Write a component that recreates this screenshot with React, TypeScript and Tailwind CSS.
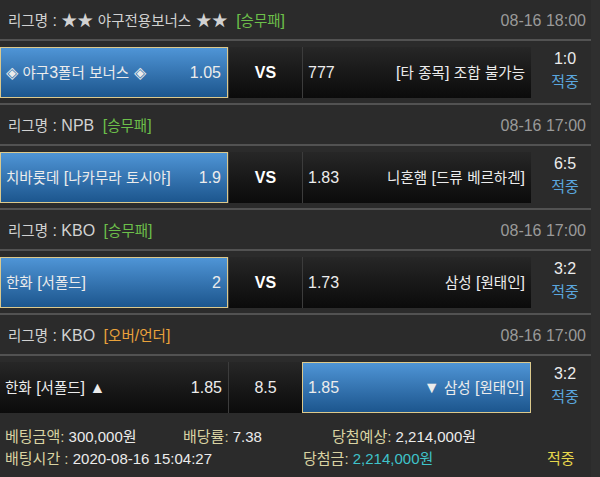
type Match = {
  league: string;
  market: string;
  marketColor: string;
  time: string;
  home: string;
  homeOdds: string;
  mid: string;
  midBold: boolean;
  awayOdds: string;
  away: string;
  score: string;
  pick: 'home' | 'away';
};

const matches: Match[] = [
  { league: '★★ 야구전용보너스 ★★', market: '[승무패]', marketColor: 'text-[#6cbf4a]', time: '08-16 18:00', home: '◈ 야구3폴더 보너스 ◈', homeOdds: '1.05', mid: 'VS', midBold: true, awayOdds: '777', away: '[타 종목] 조합 불가능', score: '1:0', pick: 'home' },
  { league: 'NPB', market: '[승무패]', marketColor: 'text-[#6cbf4a]', time: '08-16 17:00', home: '치바롯데 [나카무라 토시야]', homeOdds: '1.9', mid: 'VS', midBold: true, awayOdds: '1.83', away: '니혼햄 [드류 베르하겐]', score: '6:5', pick: 'home' },
  { league: 'KBO', market: '[승무패]', marketColor: 'text-[#6cbf4a]', time: '08-16 17:00', home: '한화 [서폴드]', homeOdds: '2', mid: 'VS', midBold: true, awayOdds: '1.73', away: '삼성 [원태인]', score: '3:2', pick: 'home' },
  { league: 'KBO', market: '[오버/언더]', marketColor: 'text-[#e9a23b]', time: '08-16 17:00', home: '한화 [서폴드] ▲', homeOdds: '1.85', mid: '8.5', midBold: false, awayOdds: '1.85', away: '▼ 삼성 [원태인]', score: '3:2', pick: 'away' },
];

const blue = 'bg-linear-to-b from-[#4f95d6] to-[#1c568e] border border-[#dcc98c]';
const dark = 'bg-linear-to-b from-[#272727] to-[#0b0b0b]';

// hangul glyphs run a bit narrower than Noto in the original, shrink them slightly
function K({ text }: { text: string }) {
  return (
    <>
      {text.split(/([\uAC00-\uD7A3]+)/).map((part, i) =>
        /[\uAC00-\uD7A3]/.test(part) ? <span key={i} className="text-[14.5px]">{part}</span> : part
      )}
    </>
  );
}

function MatchBlock({ m, last }: { m: Match; last: boolean }) {
  return (
    <div>
      <div className="h-[39px] flex items-center justify-between pt-[2px] pl-[8px] pr-[5px] text-[16px]">
        <div className="text-[#d2d2d2]">
          <K text={`리그명 : ${m.league}`} /> <span className={`ml-[4px] ${m.marketColor}`}><K text={m.market} /></span>
        </div>
        <div className="text-[#9a9a9a]">{m.time}</div>
      </div>
      <div className="h-[2px] bg-[#525252]" />
      <div className="flex pt-[6px] pb-[4px] text-[16px] text-[#ececec]">
        <div className={`w-[228px] h-[51px] flex items-center justify-between pl-[5px] pr-[6px] ${m.pick === 'home' ? blue : dark}`}>
          <span><K text={m.home} /></span>
          <span>{m.homeOdds}</span>
        </div>
        <div className={`w-[74px] h-[51px] flex items-center justify-center border-l border-[#3c3c3c] ${dark} ${m.midBold ? 'font-bold text-white' : ''}`}>
          {m.mid}
        </div>
        <div className={`w-[229px] h-[51px] flex items-center justify-between pl-[5px] pr-[6px] ${m.pick === 'away' ? blue : `${dark} border-l border-[#3c3c3c]`}`}>
          <span>{m.awayOdds}</span>
          <span><K text={m.away} /></span>
        </div>
        <div className="flex-1 flex flex-col items-center justify-center pl-[8px] pb-[6px] leading-[23px]">
          <span className="text-[#ececec]">{m.score}</span>
          <span className="text-[#5aa6de] text-[15px]">적중</span>
        </div>
      </div>
      {!last && <div className="h-[2px] bg-[#525252]" />}
    </div>
  );
}

export default function App() {
  return (
    <div className="w-[600px] h-[477px] flex bg-[#2b2b2b] overflow-hidden font-['Liberation_Sans','Noto_Sans_CJK_KR',sans-serif]">
      <div className="w-[591px]">
        {matches.map((m, i) => (
          <MatchBlock key={i} m={m} last={i === matches.length - 1} />
        ))}
        <div className="pt-[8px] pl-[5px] text-[15px] leading-[22px]">
          <div className="flex">
            <span className="w-[178px] text-[#d9d3a2]">베팅금액: <span className="text-[#ececec]">300,000원</span></span>
            <span className="w-[149px] text-[#d9d3a2]">배당률: <span className="text-[#ececec]">7.38</span></span>
            <span className="text-[#d9d3a2]">당첨예상: <span className="text-[#ececec]">2,214,000원</span></span>
          </div>
          <div className="flex">
            <span className="w-[298px] text-[#d9d3a2]">배팅시간 : <span className="text-[#ececec]">2020-08-16 15:04:27</span></span>
            <span className="w-[244px] text-[#d9d3a2]">당첨금: <span className="text-[#3fc3ca]">2,214,000원</span></span>
            <span className="text-[#e6d84c]">적중</span>
          </div>
        </div>
      </div>
      <div className="flex-1 bg-[#2f2f2f]" />
    </div>
  );
}
